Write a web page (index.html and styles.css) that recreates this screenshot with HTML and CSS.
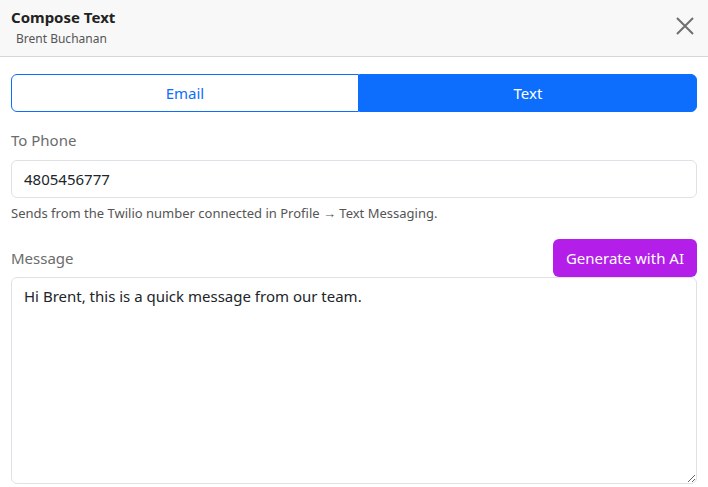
FILE: index.html
```html
<!DOCTYPE html>
<html lang="en">
<head>
  <meta charset="UTF-8" />
  <meta name="viewport" content="width=device-width, initial-scale=1.0"/>
  <title>Compose Text</title>
  <link rel="stylesheet" href="styles.css">
</head>
<body>
  <div class="modal">
    <div class="modal-header">
      <div class="header-text">
        <div class="modal-title">Compose Text</div>
        <div class="modal-subtitle">Brent Buchanan</div>
      </div>
      <button class="close-btn" aria-label="Close">
        <svg width="18" height="18" viewBox="0 0 18 18">
          <path d="M1 1 L17 17 M17 1 L1 17" stroke="#6f6f6f" stroke-width="2" fill="none"/>
        </svg>
      </button>
    </div>

    <div class="modal-body">
      <div class="segmented">
        <button class="seg-btn">Email</button>
        <button class="seg-btn active">Text</button>
      </div>

      <label class="field-label">To Phone</label>
      <input class="field-input" type="text" value="4805456777">
      <div class="help-text">Sends from the Twilio number connected in Profile → Text Messaging.</div>

      <div class="message-row">
        <label class="field-label">Message</label>
        <button class="ai-btn">Generate with AI</button>
      </div>
      <textarea class="field-textarea">Hi Brent, this is a quick message from our team.</textarea>
    </div>
  </div>
</body>
</html>
```

FILE: styles.css
```css
body {
  margin: 0;
  font-family: "Noto Sans", "Open Sans", sans-serif;
  color: #212529;
  background: #fff;
}
.modal {
  width: 708px;
}
.modal-header {
  display: flex;
  justify-content: space-between;
  align-items: center;
  background-color: #f8f8f8;
  border-bottom: 1px solid #d6d6d6;
  height: 57px;
  box-sizing: border-box;
  padding: 0 14px 0 11px;
}
.modal-title {
  font-size: 15px;
  font-weight: bold;
  color: #222;
  line-height: 20px;
  margin-top: -3px;
}
.modal-subtitle {
  font-size: 12px;
  color: #555;
  padding-left: 5px;
  margin-top: 4px;
  line-height: 16px;
}
.close-btn {
  background: none;
  border: none;
  padding: 0;
  width: 18px;
  height: 18px;
  cursor: pointer;
  margin-top: -4px;
}
.modal-body {
  padding: 17px 11px 0 11px;
}
.segmented {
  display: flex;
  height: 38px;
  margin-bottom: 18px;
}
.seg-btn {
  flex: 1 1 auto;
  font-family: inherit;
  font-size: 15px;
  border: 1px solid #0d6efd;
  background: #fff;
  color: #0d6efd;
  cursor: pointer;
}
.seg-btn:first-child {
  border-radius: 6px 0 0 6px;
}
.seg-btn:last-child {
  border-radius: 0 6px 6px 0;
}
.seg-btn.active {
  background-color: #0d6efd;
  color: #fff;
}
.field-label {
  display: block;
  font-size: 15px;
  color: #6c6c6c;
  line-height: 20px;
  margin-bottom: 10px;
}
.field-input {
  display: block;
  width: 100%;
  box-sizing: border-box;
  height: 38px;
  border: 1px solid #dee2e6;
  border-radius: 6px;
  padding: 0 12px;
  font-family: inherit;
  font-size: 15px;
  color: #212529;
}
.help-text {
  font-size: 13px;
  color: #555;
  margin-top: 6px;
  line-height: 18px;
}
.message-row {
  display: flex;
  justify-content: space-between;
  align-items: flex-end;
  margin-top: 17px;
}
.message-row .field-label {
  margin-bottom: 9px;
}
.ai-btn {
  background-color: #b31ee8;
  color: #fff;
  border: none;
  border-radius: 6px;
  height: 38px;
  padding: 0 13px;
  font-family: inherit;
  font-size: 15px;
  cursor: pointer;
}
.field-textarea {
  display: block;
  width: 100%;
  box-sizing: border-box;
  height: 207px;
  border: 1px solid #dee2e6;
  border-radius: 6px;
  padding: 7px 12px;
  font-family: inherit;
  font-size: 15px;
  line-height: 22px;
  color: #212529;
  resize: vertical;
}
```
